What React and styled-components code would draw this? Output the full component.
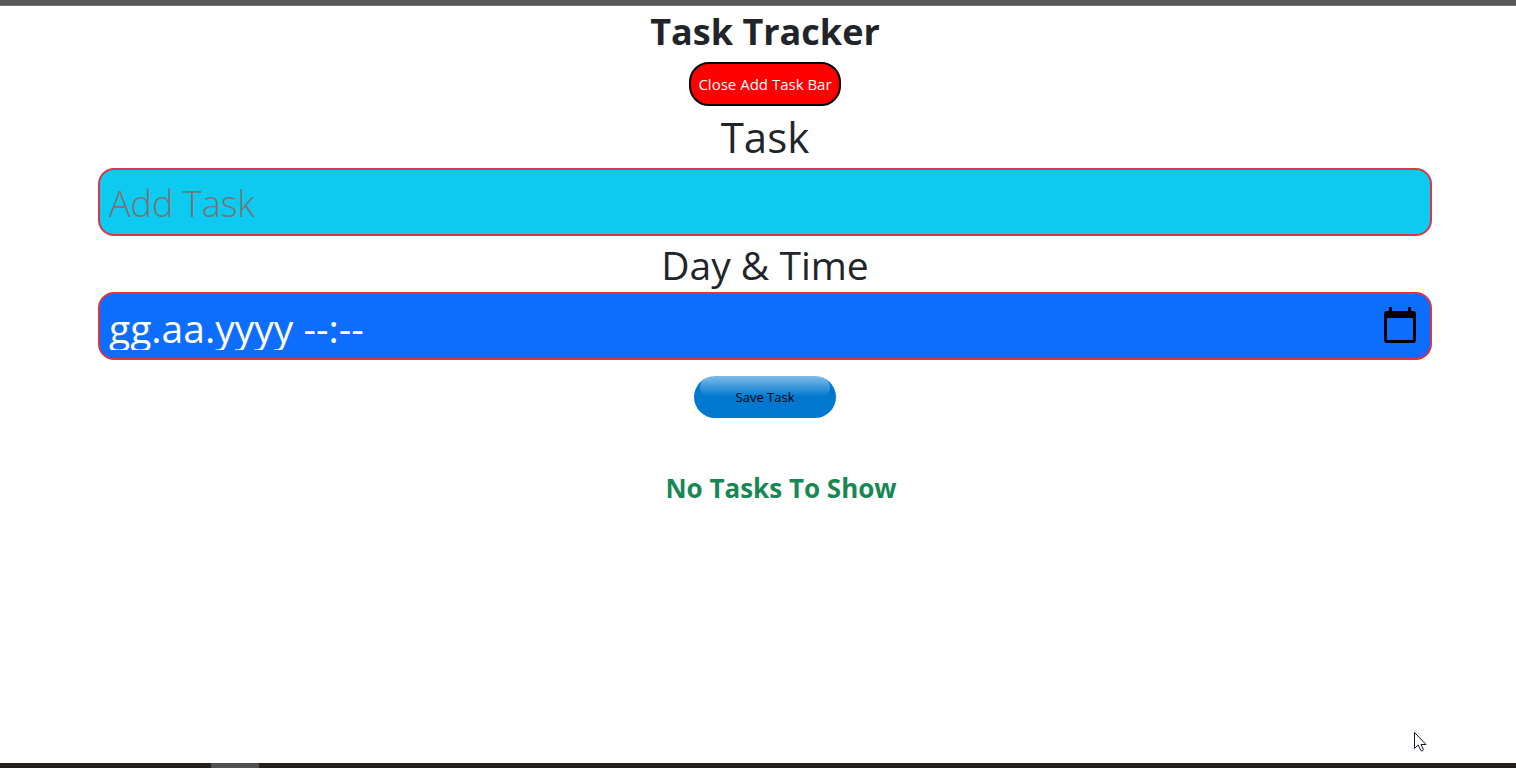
import React, { useState } from "react";
import styled, { createGlobalStyle } from "styled-components";

const GlobalStyle = createGlobalStyle`
  * { box-sizing: border-box; }
  body {
    margin: 0;
    background: #fff;
    color: #212529;
    font-family: "Open Sans", "Noto Sans", sans-serif;
    font-size: 16px;
  }
`;

const Page = styled.div`
  min-height: 100vh;
  display: flex;
  flex-direction: column;
`;

const TopStrip = styled.div`
  height: 6px;
  background: #575757;
  border-bottom: 1px solid #777274;
`;

const BottomStrip = styled.div`
  height: 5px;
  padding-left: 211px;
  background: #231f1d;
`;

const ActiveMark = styled.div`
  width: 48px;
  height: 5px;
  background: #504e4f;
`;

const Main = styled.main`
  flex: 1;
  display: flex;
  flex-direction: column;
  align-items: center;
  padding: 0 84px 0 98px;
`;

const Title = styled.h1`
  margin: 0;
  font-size: 36px;
  line-height: 52px;
  font-weight: 700;
`;

const ToggleButton = styled.button`
  margin-top: 4px;
  width: 152px;
  height: 44px;
  padding: 0;
  border: 2px solid #000;
  border-radius: 20px;
  background: #f00;
  color: #fff;
  font-family: inherit;
  font-size: 15px;
  white-space: nowrap;
`;

const Form = styled.form`
  width: 100%;
  display: flex;
  flex-direction: column;
  align-items: center;
`;

const FieldLabel = styled.label`
  padding-top: ${(p) => p.$top}px;
  font-size: ${(p) => p.$size}px;
  line-height: ${(p) => p.$line}px;
  font-weight: 400;
`;

const Field = styled.div`
  width: 100%;
  height: 68px;
  display: flex;
  align-items: flex-start;
  padding: 0 14px 0 9px;
  border: 2px solid #dc3545;
  border-radius: 16px;
  background: ${(p) => p.$fill};
`;

const FieldInput = styled.input`
  flex: 1;
  min-width: 0;
  height: 56px;
  padding: 10px 0 0;
  border: 0;
  outline: 0;
  background: transparent;
  color: #fff;
  font-family: inherit;
  font-size: ${(p) => p.$size}px;
  font-weight: ${(p) => p.$weight};
  &::placeholder { color: #757575; opacity: 1; }
`;

const PickerButton = styled.button`
  display: flex;
  margin-top: 12px;
  padding: 0;
  border: 0;
  background: transparent;
`;

const SaveButton = styled.button`
  position: relative;
  margin-top: 16px;
  width: 142px;
  height: 42px;
  padding: 0;
  border: 0;
  border-radius: 21px;
  background: #0078d0;
  color: #000;
  font-family: inherit;
  font-size: 13px;
  &::before {
    content: "";
    position: absolute;
    top: 0;
    left: 6px;
    right: 6px;
    height: 21px;
    border-radius: 16px 16px 12px 12px;
    background: linear-gradient(rgba(255, 255, 255, 0.5), rgba(255, 255, 255, 0));
  }
`;

const SaveText = styled.span`
  position: relative;
`;

const EmptyMessage = styled.p`
  margin: 52px 0 0;
  padding-left: 32px;
  color: #198754;
  font-size: 26px;
  line-height: 36px;
  font-weight: 700;
`;

const Pointer = styled.svg`
  position: fixed;
  right: 89px;
  bottom: 16px;
  pointer-events: none;
`;

export default function App() {
  const [task, setTask] = useState("");
  const [when, setWhen] = useState("gg.aa.yyyy --:--");
  return (
    <Page>
      <GlobalStyle />
      <TopStrip />
      <Main>
        <Title>Task Tracker</Title>
        <ToggleButton type="button">Close Add Task Bar</ToggleButton>
        <Form onSubmit={(e) => e.preventDefault()}>
          <FieldLabel htmlFor="task" $size={42} $line={62} $top={0}>Task</FieldLabel>
          <Field $fill="#0dcaf0">
            <FieldInput id="task" type="text" placeholder="Add Task" $size={36} $weight={300}
              value={task} onChange={(e) => setTask(e.target.value)} />
          </Field>
          <FieldLabel htmlFor="when" $size={39} $line={54} $top={2}>Day &amp; Time</FieldLabel>
          <Field $fill="#0d6efd">
            <FieldInput id="when" type="text" $size={39} $weight={400}
              value={when} onChange={(e) => setWhen(e.target.value)} />
            <PickerButton type="button" aria-label="Open calendar">
              <svg width="32" height="38" viewBox="0 0 32 38">
                <path d="M5 1h3v4h16V1h3v4h2a3 3 0 0 1 3 3v26a3 3 0 0 1-3 3H3a3 3 0 0 1-3-3V8a3 3 0 0 1 3-3h2zM3 12v21a1 1 0 0 0 1 1h24a1 1 0 0 0 1-1V12z" fillRule="evenodd" />
              </svg>
            </PickerButton>
          </Field>
          <SaveButton type="submit"><SaveText>Save Task</SaveText></SaveButton>
        </Form>
        <EmptyMessage>No Tasks To Show</EmptyMessage>
      </Main>
      <BottomStrip><ActiveMark /></BottomStrip>
      <Pointer width="13" height="20" viewBox="0 0 13 20" aria-hidden="true">
        <path d="M.5.5v16l3.700-3.500 2.600 5.500c.6 1 2.800.2 2.500-1.200L7 12.500h5z" fill="#fff" stroke="#151528" />
      </Pointer>
    </Page>
  );
}
